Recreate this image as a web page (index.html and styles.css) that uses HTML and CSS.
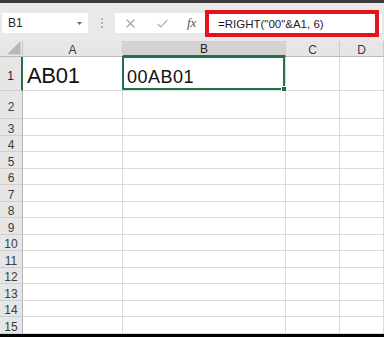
FILE: index.html
```html
<!DOCTYPE html>
<html>
<head>
<meta charset="utf-8">
<link rel="stylesheet" href="styles.css">
</head>
<body>
<div class="app">
  <div class="toolbar">
    <div class="namebox">
      <span class="nb-text">B1</span>
      <svg class="caret" width="5" height="3" viewBox="0 0 5 3"><path d="M0 0H5L2.5 3Z" fill="#6a6a6a"/></svg>
    </div>
    <div class="grip"><i></i><i></i><i></i></div>
    <div class="formula">
      <svg class="ic-x" width="9" height="9" viewBox="0 0 9 9"><path d="M0.5 0.5L8.5 8.5M8.5 0.5L0.5 8.5" stroke="#a3a3a3" stroke-width="1.1" fill="none"/></svg>
      <svg class="ic-check" width="11" height="9" viewBox="0 0 11 9"><path d="M0.5 4.8L3.8 8L10.5 0.8" stroke="#a3a3a3" stroke-width="1.1" fill="none"/></svg>
      <span class="fx">fx</span>
      <span class="ftext">=RIGHT("00"&amp;A1, 6)</span>
    </div>
    <div class="highlight"></div>
  </div>
  <div class="grid">
    <div class="corner"><svg width="14" height="14" viewBox="0 0 14 14"><path d="M0 13.5H13.5V0Z" fill="#b8b8b8"/></svg></div>
    <div class="ch">A</div><div class="ch sel">B</div><div class="ch">C</div><div class="ch">D</div>

    <div class="rh sel">1</div><div class="c big">AB01</div><div class="c active"><span class="val">00AB01</span><i class="handle"></i></div><div class="c"></div><div class="c"></div>
    <div class="rh">2</div><div class="c"></div><div class="c"></div><div class="c"></div><div class="c"></div>
    <div class="rh">3</div><div class="c"></div><div class="c"></div><div class="c"></div><div class="c"></div>
    <div class="rh">4</div><div class="c"></div><div class="c"></div><div class="c"></div><div class="c"></div>
    <div class="rh">5</div><div class="c"></div><div class="c"></div><div class="c"></div><div class="c"></div>
    <div class="rh">6</div><div class="c"></div><div class="c"></div><div class="c"></div><div class="c"></div>
    <div class="rh">7</div><div class="c"></div><div class="c"></div><div class="c"></div><div class="c"></div>
    <div class="rh">8</div><div class="c"></div><div class="c"></div><div class="c"></div><div class="c"></div>
    <div class="rh">9</div><div class="c"></div><div class="c"></div><div class="c"></div><div class="c"></div>
    <div class="rh">10</div><div class="c"></div><div class="c"></div><div class="c"></div><div class="c"></div>
    <div class="rh">11</div><div class="c"></div><div class="c"></div><div class="c"></div><div class="c"></div>
    <div class="rh">12</div><div class="c"></div><div class="c"></div><div class="c"></div><div class="c"></div>
    <div class="rh">13</div><div class="c"></div><div class="c"></div><div class="c"></div><div class="c"></div>
    <div class="rh">14</div><div class="c"></div><div class="c"></div><div class="c"></div><div class="c"></div>
    <div class="rh">15</div><div class="c"></div><div class="c"></div><div class="c"></div><div class="c"></div>
  </div>
</div>
</body>
</html>
```

FILE: styles.css
```css
* { box-sizing: border-box; }
html, body { margin: 0; padding: 0; }
body {
  width: 384px;
  height: 337px;
  overflow: hidden;
  background: #000;
  font-family: "Liberation Sans", Arial, sans-serif;
}
.app {
  background: #fff;
  border-top: 3px solid #3a3a3a;
  height: 333.5px;
  overflow: hidden;
}
.toolbar {
  position: relative;
  height: 38px;
  background: #e9e9e9;
  display: flex;
  align-items: flex-start;
  padding: 10px 2px 0 2px;
}
.namebox {
  width: 86px;
  height: 20px;
  background: #fff;
  display: flex;
  align-items: center;
  justify-content: space-between;
  padding: 0 6px 0 6px;
  font-size: 12px;
  color: #262626;
}
.grip {
  width: 27px;
  height: 20px;
  display: flex;
  flex-direction: column;
  align-items: center;
  justify-content: center;
  gap: 2px;
}
.grip i {
  display: block;
  width: 2px;
  height: 2px;
  background: #b3b3b3;
}
.formula {
  flex: 1;
  height: 20px;
  background: #fff;
  display: flex;
  align-items: center;
  padding-left: 11px;
}
.ic-x { margin-right: 22px; }
.ic-check { margin-right: 19px; }
.fx {
  font-family: "Liberation Serif", "Times New Roman", serif;
  font-style: italic;
  font-size: 13px;
  color: #555;
  width: 10px;
  margin-right: 21px;
}
.ftext {
  font-size: 11.5px;
  color: #1e1e1e;
  padding-top: 2px;
  white-space: nowrap;
}
.highlight {
  position: absolute;
  left: 205px;
  top: 7px;
  width: 174px;
  height: 27px;
  border: 4px solid #e3141d;
}
.grid {
  display: grid;
  grid-template-columns: 23px 100px 163px 54px 44px;
  grid-template-rows: 16px 34px 28px repeat(13, 16.5px);
}
.corner {
  background: #e6e6e6;
  border-right: 1px solid #c8c8c8;
  border-bottom: 1px solid #bababa;
  display: flex;
  justify-content: flex-end;
  align-items: flex-end;
  padding: 0 1px 1px 0;
}
.ch {
  background: #e6e6e6;
  border-right: 1px solid #cbcbcb;
  border-bottom: 1px solid #bababa;
  font-size: 12px;
  line-height: 12px;
  color: #3c3c3c;
  display: flex;
  justify-content: center;
  align-items: flex-end;
}
.ch.sel {
  background: #d3d3d3;
  border-bottom: 2px solid #217346;
  color: #262626;
}
.rh {
  background: #e6e6e6;
  border-right: 1px solid #b5b5b5;
  border-bottom: 1px solid #cfcfcf;
  font-size: 12px;
  line-height: 12px;
  color: #3c3c3c;
  display: flex;
  justify-content: center;
  align-items: center;
  padding-top: 4px;
}
.rh.sel {
  border-right: 2px solid #217346;
  color: #262626;
}
.c {
  border-right: 1px solid #dcdcdc;
  border-bottom: 1px solid #dcdcdc;
}
.big {
  font-size: 22px;
  line-height: 22px;
  letter-spacing: -0.3px;
  color: #111;
  display: flex;
  align-items: flex-end;
  padding: 0 0 3px 4px;
}
.active {
  position: relative;
  display: flex;
  align-items: flex-end;
  padding: 0 0 4px 4px;
}
.active::before {
  content: "";
  position: absolute;
  left: -1px;
  top: -1px;
  right: 0;
  bottom: 0;
  border: 2px solid #217346;
}
.val {
  font-size: 18px;
  line-height: 18px;
  letter-spacing: 0.5px;
  color: #111;
}
.handle {
  position: absolute;
  right: -1px;
  bottom: -1px;
  width: 5px;
  height: 5px;
  background: #217346;
  border-left: 1px solid #fff;
  border-top: 1px solid #fff;
}
```
